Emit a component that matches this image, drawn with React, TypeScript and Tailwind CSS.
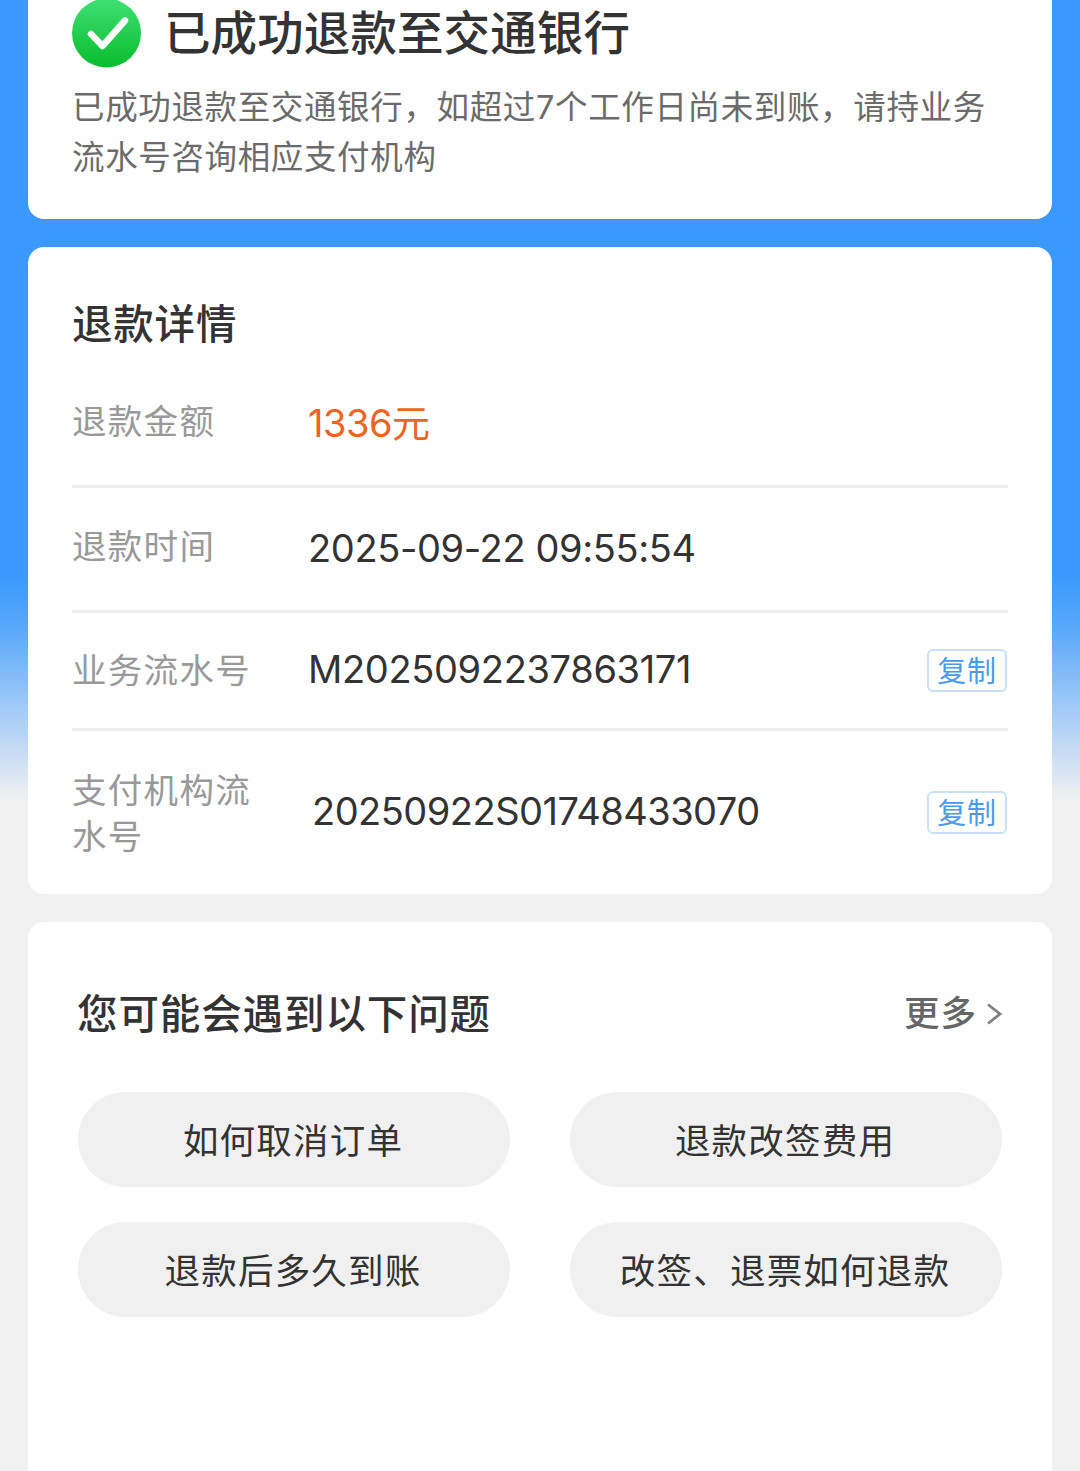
import { clsx } from 'clsx';

interface DetailItem {
  label: string;
  value: string;
  rowClass: string;
  labelClass?: string;
  valueClass: string;
  copyable?: boolean;
}

const DETAILS: DetailItem[] = [
  {
    label: '退款金额',
    value: '1336元',
    rowClass: 'h-[129px] border-b-3',
    labelClass: 'pb-px',
    valueClass: 'text-[#ee6420] pt-0.5 tracking-[-0.5px]',
  },
  {
    label: '退款时间',
    value: '2025-09-22 09:55:54',
    rowClass: 'h-[125px] border-b-3',
    labelClass: 'pb-1',
    valueClass: 'pb-[3px] tracking-[-0.38px]',
  },
  {
    label: '业务流水号',
    value: 'M2025092237863171',
    rowClass: 'h-[118px] border-b-3',
    valueClass: 'pb-[3px] tracking-[-0.35px]',
    copyable: true,
  },
  {
    label: '支付机构流水号',
    value: '20250922S01748433070',
    rowClass: 'h-[163px]',
    labelClass: 'pt-0.5',
    valueClass: 'pl-1 pb-1 tracking-[-0.52px]',
    copyable: true,
  },
];

const QUESTIONS = ['如何取消订单', '退款改签费用', '退款后多久到账', '改签、退票如何退款'];

function SuccessIcon() {
  return (
    <svg className="w-[70px] h-[70px] shrink-0 -mt-0.5" viewBox="0 0 70 70" fill="none">
      <defs>
        <linearGradient id="success" x1="0" y1="0" x2="0" y2="1">
          <stop offset="0" stopColor="#3fe075" />
          <stop offset="1" stopColor="#08bd2c" />
        </linearGradient>
      </defs>
      <circle cx="34.5" cy="35" r="34.5" fill="url(#success)" />
      <path
        d="M19 36L30.5 48L53 22.5"
        stroke="#fff"
        strokeWidth="6.5"
        strokeLinecap="round"
        strokeLinejoin="round"
      />
    </svg>
  );
}

function DetailRow({ item }: { item: DetailItem }) {
  return (
    <div className={clsx('flex items-center border-[#eeeeee]', item.rowClass)}>
      <div
        className={clsx(
          'w-[180px] mr-[56px] shrink-0 text-[34.5px] leading-[46px] tracking-[1.3px] text-[#999999]',
          item.labelClass,
        )}
      >
        {item.label}
      </div>
      <div className={clsx('flex-1 whitespace-nowrap text-[38px] leading-[46px]', item.valueClass)}>
        {item.value}
      </div>
      {item.copyable && (
        <button className="w-20 h-[43px] mr-px rounded-md border-2 border-[#c9e1f7] pt-[3px] text-[29px] leading-[36px] tracking-[0.8px] text-[#4a9bee]">
          复制
        </button>
      )}
    </div>
  );
}

export default function App() {
  return (
    <div className="h-[1471px] overflow-hidden bg-[#f0f0f0] bg-[linear-gradient(to_bottom,#3b99fd_575px,#5aa9fa_630px,#a3cbf7_710px,#f0f0f0_800px)] px-7 text-[#333333] font-['Inter','Noto_Sans_CJK_SC',sans-serif]">
      {/* Refund status */}
      <div className="h-[219px] rounded-b-2xl bg-white px-11">
        <div className="flex items-center h-[68px]">
          <SuccessIcon />
          <h1 className="ml-[22px] pb-[3px] text-[46.5px] leading-[60px] font-medium tracking-[0.1px]">
            已成功退款至交通银行
          </h1>
        </div>
        <p className="mt-[15px] text-[32.5px] leading-[50px] tracking-[0.64px] text-[#6b6b6b]">
          已成功退款至交通银行，如超过7个工作日尚未到账，请持业务流水号咨询相应支付机构
        </p>
      </div>

      {/* Refund details */}
      <div className="mt-7 h-[647px] rounded-2xl bg-white px-11 pt-12">
        <h2 className="h-16 text-[40.5px] leading-[60px] font-medium tracking-[0.8px]">退款详情</h2>
        {DETAILS.map((item) => (
          <DetailRow key={item.label} item={item} />
        ))}
      </div>

      {/* Common questions */}
      <div className="mt-7 h-[560px] rounded-t-2xl bg-white pt-[61px] px-[50px]">
        <div className="flex items-center justify-between h-[61px]">
          <h2 className="-ml-px pt-0.5 text-[40.5px] leading-[60px] font-medium tracking-[0.9px]">
            您可能会遇到以下问题
          </h2>
          <button className="flex items-center text-[35.5px] leading-[60px] font-medium tracking-[1px] text-[#666666]">
            更多
            <svg className="ml-2 -mr-px w-[18px] h-6" viewBox="0 0 18 24" fill="none">
              <path d="M3 2.5L15 12L3 21.5" stroke="#808080" strokeWidth="2.8" />
            </svg>
          </button>
        </div>
        <div className="mt-12 grid grid-cols-2 gap-x-[60px] gap-y-[35px]">
          {QUESTIONS.map((question) => (
            <button
              key={question}
              className="h-[95px] rounded-full bg-[#f0f0f0] pt-1 pr-0.5 text-[35.5px] leading-[50px] tracking-[1.2px]"
            >
              {question}
            </button>
          ))}
        </div>
      </div>
    </div>
  );
}
